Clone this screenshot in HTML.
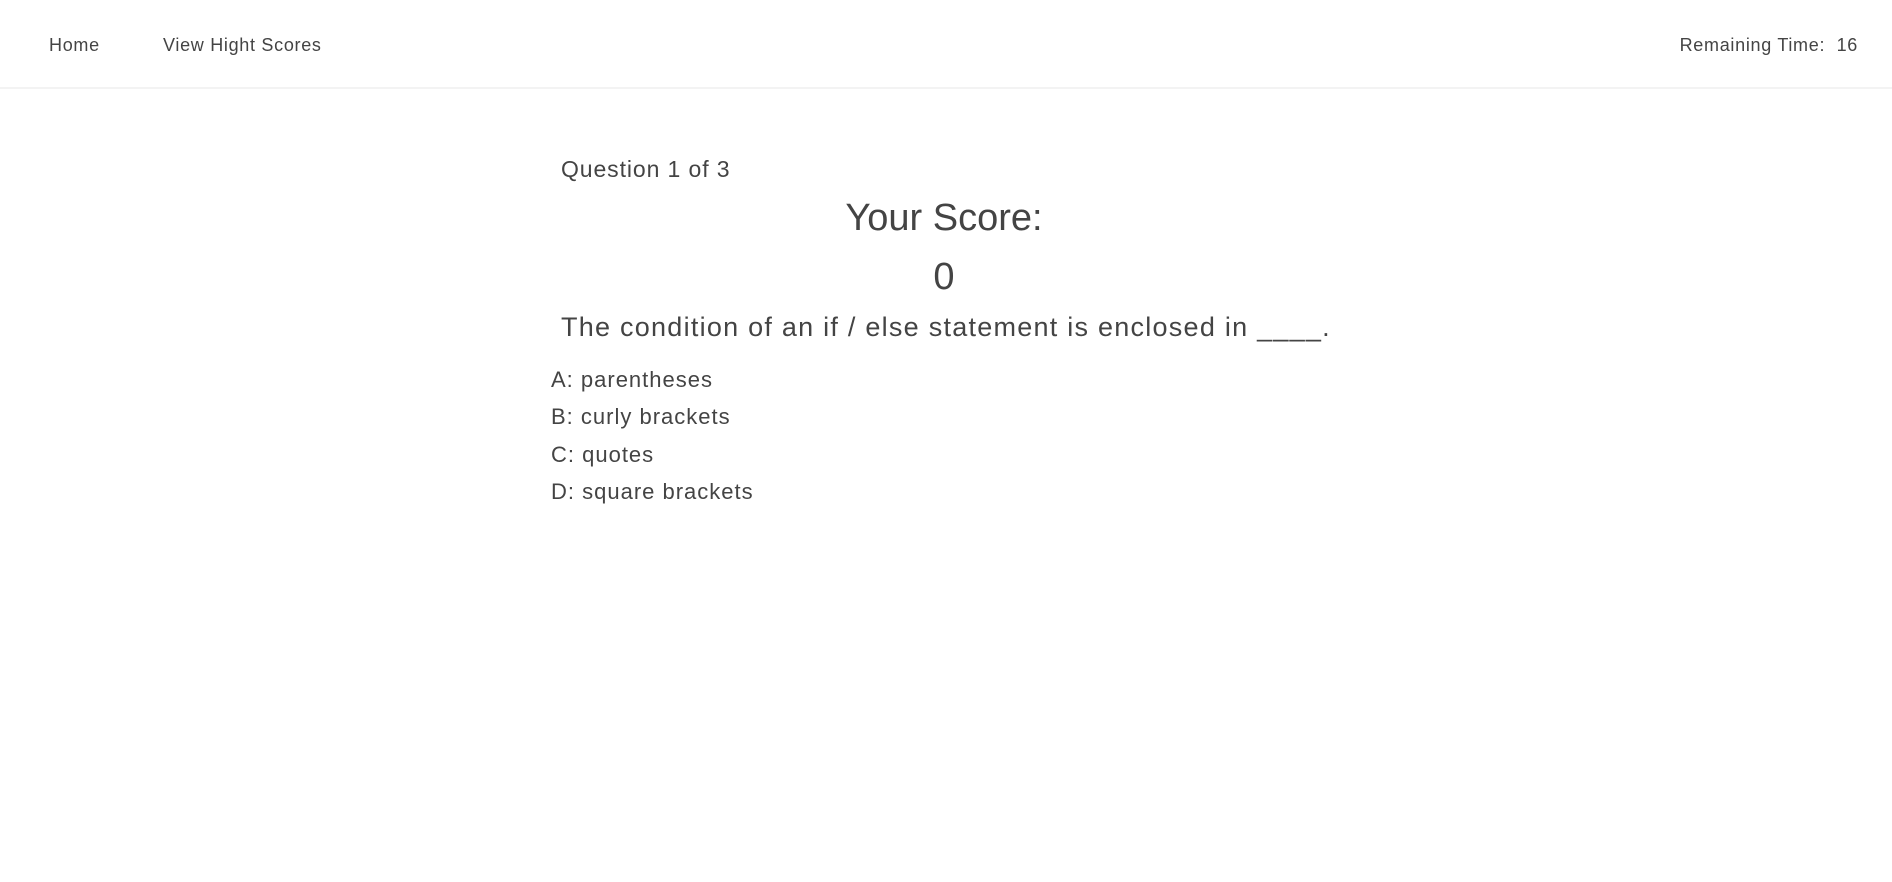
<!DOCTYPE html>
<html><head><meta charset="utf-8"><style>
body{margin:0;width:1892px;height:882px;background:#fff;font-family:"Liberation Sans",sans-serif;color:#444;position:relative;overflow:hidden}
.nav{position:absolute;left:0;top:0;width:1892px;height:87px;border-bottom:2px solid #f3f3f3}
.t{position:absolute;white-space:nowrap;line-height:1}
.n{font-size:18px;letter-spacing:0.7px}
.a{font-size:22px;letter-spacing:1px}
</style></head><body>
<div class="nav"></div>
<div class="t n" style="left:49px;top:36px">Home</div>
<div class="t n" style="left:163px;top:36px">View Hight Scores</div>
<div class="t n" style="right:34px;top:36px">Remaining Time:&nbsp; 16</div>
<div class="t" style="left:561px;top:158px;font-size:23px;letter-spacing:0.9px">Question 1 of 3</div>
<div class="t" style="left:0;width:1888px;text-align:center;top:199px;font-size:38px">Your Score:</div>
<div class="t" style="left:0;width:1888px;text-align:center;top:258px;font-size:38px">0</div>
<div class="t" style="left:561px;top:314px;font-size:27px;letter-spacing:1.25px">The condition of an if / else statement is enclosed in ____.</div>
<div class="t a" style="left:551px;top:369px">A: parentheses</div>
<div class="t a" style="left:551px;top:406px">B: curly brackets</div>
<div class="t a" style="left:551px;top:444px">C: quotes</div>
<div class="t a" style="left:551px;top:481px">D: square brackets</div>
</body></html>
